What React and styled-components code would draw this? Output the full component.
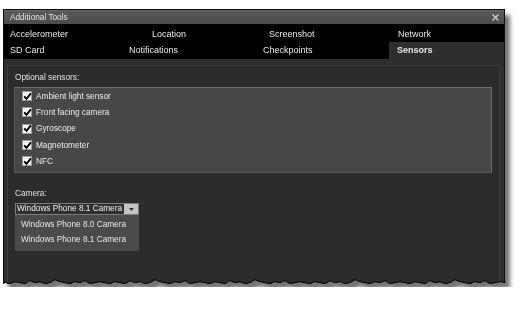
import React from "react";
import styled, { createGlobalStyle } from "styled-components";

const GlobalStyle = createGlobalStyle`
  html, body {
    margin: 0;
    padding: 0;
    background: #ffffff;
  }
  body {
    font-family: "Liberation Sans", Arial, sans-serif;
  }
`;

// torn bottom edge of the screenshot
const tornEdge = (() => {
  const jitter = [1, 0, 2, 1, 0, 3, 1, 2, 0, 1, 4, 2, 1, 0, 2, 1, 3, 0, 1, 2];
  const pts = ["0 0", "502px 0"];
  for (let x = 502; x >= 0; x -= 5) {
    const j = jitter[Math.floor(x / 5) % jitter.length];
    pts.push(`${x}px ${274 - j}px`);
  }
  pts.push("0 274px");
  return `polygon(${pts.join(", ")})`;
})();

const tabRows = [
  [
    { label: "Accelerometer", width: 142 },
    { label: "Location", width: 117 },
    { label: "Screenshot", width: 129 },
    { label: "Network", width: 112 },
  ],
  [
    { label: "SD Card", width: 119 },
    { label: "Notifications", width: 134 },
    { label: "Checkpoints", width: 132 },
    { label: "Sensors", width: 115, active: true },
  ],
];

const sensors = [
  "Ambient light sensor",
  "Front facing camera",
  "Gyroscope",
  "Magnetometer",
  "NFC",
];

const cameras = ["Windows Phone 8.0 Camera", "Windows Phone 8.1 Camera"];

const CheckIcon = () => (
  <svg width="9" height="9" viewBox="0 0 9 9">
    <path
      d="M1.2 4.4 L3.5 6.9 L7.9 1.4"
      fill="none"
      stroke="#000"
      strokeWidth="1.9"
    />
  </svg>
);

const CloseIcon = () => (
  <svg width="7" height="7" viewBox="0 0 7 7">
    <path d="M0.5 0.5 L6.5 6.5 M6.5 0.5 L0.5 6.5" stroke="#cfcfcf" strokeWidth="1.3" />
  </svg>
);

const App = () => {
  return (
    <>
      <GlobalStyle />
      <Frame>
        <Window>
          <TitleBar>
            <span>Additional Tools</span>
            <CloseBtn>
              <CloseIcon />
            </CloseBtn>
          </TitleBar>
          {tabRows.map((row, i) => (
            <TabRow key={i} $first={i === 0}>
              {row.map((tab) => (
                <Tab
                  key={tab.label}
                  $width={tab.width}
                  $active={tab.active}
                  $first={i === 0}
                >
                  {tab.label}
                </Tab>
              ))}
            </TabRow>
          ))}
          <Content>
            <Panel>
              <Label>Optional sensors:</Label>
              <SensorList>
                {sensors.map((s) => (
                  <SensorRow key={s}>
                    <Box>
                      <CheckIcon />
                    </Box>
                    {s}
                  </SensorRow>
                ))}
              </SensorList>
              <Label $top={15}>Camera:</Label>
              <ComboWrap>
                <Combo>
                  <ComboText>Windows Phone 8.1 Camera</ComboText>
                  <ComboArrow>
                    <svg width="5" height="3" viewBox="0 0 5 3">
                      <path d="M0 0 L5 0 L2.5 3 Z" fill="#333" />
                    </svg>
                  </ComboArrow>
                </Combo>
                <Popup>
                  {cameras.map((c) => (
                    <PopupItem key={c}>{c}</PopupItem>
                  ))}
                </Popup>
              </ComboWrap>
            </Panel>
          </Content>
        </Window>
      </Frame>
    </>
  );
};

export default App;

// 스타일
const Frame = styled.div`
  width: 502px;
  margin: 9px 0 0 3px;
  filter: drop-shadow(0 1px 0 #000) drop-shadow(5px 6px 2px rgba(0, 0, 0, 0.55));
`;

const Window = styled.div`
  box-sizing: border-box;
  width: 502px;
  height: 278px;
  border: 1px solid #0c0c0c;
  border-bottom: none;
  background: #2e2e2e;
  display: flex;
  flex-direction: column;
  clip-path: ${tornEdge};
`;

const TitleBar = styled.div`
  height: 14px;
  flex-shrink: 0;
  display: flex;
  align-items: center;
  justify-content: space-between;
  padding: 0 6px;
  background: linear-gradient(#5a5a5a, #4c4c4c);
  border-top: 1px solid #666;
  box-sizing: border-box;
  color: #e4e4e4;
  font-size: 8.25px;
  line-height: 14px;
`;

const CloseBtn = styled.div`
  display: flex;
  align-items: center;
  margin-right: -1px;
`;

const TabRow = styled.div`
  display: flex;
  flex-shrink: 0;
  height: ${(p) => (p.$first ? "18px" : "17px")};
  background: #000;
`;

// 탭 - 첫 줄은 글자가 조금 아래에 있음
const Tab = styled.div`
  box-sizing: border-box;
  width: ${(p) => p.$width}px;
  padding: ${(p) => (p.$first ? "3px" : "2px")} 0 0
    ${(p) => (p.$active ? "8px" : "6px")};
  color: #e8e8e8;
  font-size: 9px;
  line-height: ${(p) => (p.$first ? "15px" : "13px")};
  font-weight: ${(p) => (p.$active ? 700 : 400)};
  background: ${(p) => (p.$active ? "#2e2e2e" : "transparent")};
  white-space: nowrap;
`;

const Content = styled.div`
  flex: 1;
  display: flex;
  padding: 6px 4px 0 3px;
`;

const Panel = styled.div`
  flex: 1;
  border: 1px solid #3b3b3b;
  border-bottom: none;
  background: #2c2c2c;
  padding: 6px 7px 0 6px;
  display: flex;
  flex-direction: column;
  align-items: flex-start;
`;

const Label = styled.div`
  margin: ${(p) => p.$top || 0}px 0 4px 1px;
  color: #e2e2e2;
  font-size: 8.25px;
  line-height: 11px;
`;

const SensorList = styled.div`
  box-sizing: border-box;
  align-self: stretch;
  height: 86px;
  background: #474747;
  border: 1px solid #6c6c6c;
  border-bottom-color: #5a5a5a;
  border-left-color: #5a5a5a;
  padding: 0 0 0 7px;
`;

const SensorRow = styled.div`
  display: flex;
  align-items: center;
  gap: 4px;
  height: 16.3px;
  color: #ececec;
  font-size: 8.25px;
`;

const Box = styled.div`
  box-sizing: border-box;
  width: 10px;
  height: 10px;
  background: #f6f6f6;
  border: 1px solid #9a9a9a;
  display: flex;
  align-items: center;
  justify-content: center;
  svg {
    flex-shrink: 0;
  }
`;

const ComboWrap = styled.div`
  position: relative;
  margin-left: 1px;
`;

const Combo = styled.div`
  box-sizing: border-box;
  width: 124px;
  height: 12px;
  display: flex;
  border: 1px solid #7c7c7c;
  background: #303030;
`;

const ComboText = styled.div`
  flex: 1;
  padding-left: 1px;
  color: #ececec;
  font-size: 8.25px;
  line-height: 10px;
  white-space: nowrap;
  overflow: hidden;
`;

const ComboArrow = styled.div`
  width: 14px;
  background: #c4c4c4;
  display: flex;
  align-items: center;
  justify-content: center;
`;

const Popup = styled.div`
  position: absolute;
  top: 12px;
  left: 0;
  box-sizing: border-box;
  width: 124px;
  height: 36px;
  padding-top: 3px;
  background: #4a4a4a;
`;

const PopupItem = styled.div`
  padding-left: 6px;
  color: #e6e6e6;
  font-size: 8.25px;
  line-height: 14.7px;
  white-space: nowrap;
`;
